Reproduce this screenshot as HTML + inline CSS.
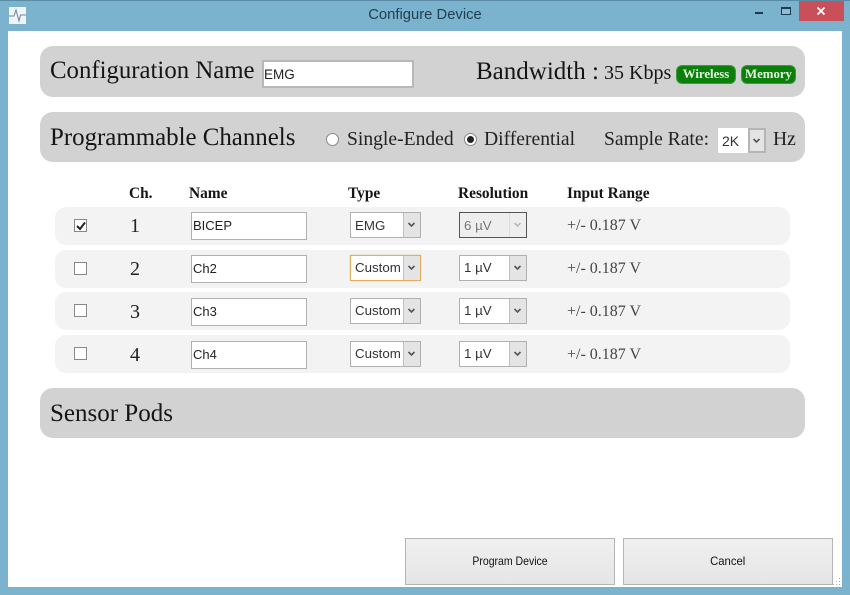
<!DOCTYPE html>
<html><head><meta charset="utf-8"><style>
html,body{margin:0;padding:0;width:850px;height:595px;overflow:hidden;background:#7bb3cf}
*{box-sizing:border-box}
div,span,svg{position:absolute}
.t{font-family:"Liberation Serif",serif;color:#151515;white-space:nowrap;line-height:1}
.s{font-family:"Liberation Sans",sans-serif;color:#222;white-space:nowrap;line-height:1}
.p{left:40px;width:765px;background:#d2d2d2;border-radius:13px}
.r{left:55px;width:735px;height:38px;background:#f3f3f3;border-radius:11px}
.i{left:191px;width:116px;height:28px;background:#fff;border:1px solid #b0b0b0;font:13px/26px "Liberation Sans",sans-serif;color:#222;padding-left:1px}
.sel{background:#fff;border:1px solid #b0b0b0;height:26px;font:13.3px/24px "Liberation Sans",sans-serif;color:#333}
.sel b{position:absolute;right:0;top:0;bottom:0;width:17px;background:#e4e4e4;border-left:1px solid #c0c0c0}
.sel svg{right:4px;top:9px}
.cb{left:74px;width:13px;height:13px;border:1px solid #888;background:#fff}
.h{font:bold 15.4px/1 "Liberation Serif",serif;color:#151515;top:186px;white-space:nowrap}
.n{left:130px;font:20px/1 "Liberation Serif",serif;color:#222}
.rng{left:567px;font:16px/1 "Liberation Serif",serif;color:#444;white-space:nowrap}
.pill{background:#0a800a;border:1px solid #3f9a3f;border-radius:6px;height:19px;top:65px;color:#e6f5e0;font:bold 12.8px/16px "Liberation Serif",serif;text-align:center}
.btn{top:538px;height:47px;border:1px solid #b5b5b5;background:linear-gradient(#f0f0f0,#e5e5e5);font:12px/45px "Liberation Sans",sans-serif;color:#111;text-align:center}
.btn span{position:static;display:inline-block}
</style></head><body>
<div style="left:0;top:0;width:850px;height:1px;background:#5c8ba5"></div>
<div style="left:8px;top:31px;width:834px;height:556px;background:#fff"></div>

<svg style="left:9px;top:7px" width="17" height="17" viewBox="0 0 17 17"><rect width="17" height="17" fill="#eef4f9"/><path d="M0 9H5L7 3 10 14 11.500 8H17" fill="none" stroke="#6a8a9c" stroke-width="1"/></svg>
<div class="s" style="left:0;width:850px;top:7px;text-align:center;font-size:14.8px;line-height:16px;color:#21404f">Configure Device</div>
<div style="left:755px;top:12px;width:8px;height:2px;background:#1d3b4e"></div>
<div style="left:781px;top:7px;width:10px;height:8px;border:1px solid #1d3b4e;border-top:2px solid #1d3b4e;background:#8fbdd6"></div>
<div style="left:799px;top:1px;width:45px;height:20px;background:#c9505a"></div>
<svg style="left:816px;top:6px" width="10" height="10" viewBox="0 0 10 10"><path d="M1.500 1.500L8.500 8.500M8.500 1.500L1.500 8.500" stroke="#fff" stroke-width="1.800"/></svg>

<div class="p" style="top:46px;height:51px"></div>
<div class="t" style="left:50px;top:59px;font-size:24.8px">Configuration Name</div>
<div class="i" style="left:262px;top:60px;width:152px;height:28px;border:2px solid #b8b8b8;font-size:13.5px;line-height:25px;padding-left:0">EMG</div>
<div class="t" style="left:476px;top:59px;font-size:25px">Bandwidth :</div>
<div class="t" style="left:604px;top:63px;font-size:20px">35 Kbps</div>
<div class="pill" style="left:676px;width:60px">Wireless</div>
<div class="pill" style="left:741px;width:55px">Memory</div>

<div class="p" style="top:112px;height:50px"></div>
<div class="t" style="left:50px;top:126px;font-size:24.9px">Programmable Channels</div>
<div style="left:326px;top:133px;width:13px;height:13px;border-radius:50%;border:1px solid #888;background:#fff"></div>
<div class="t" style="left:347px;top:130px;font-size:19.6px;color:#222">Single-Ended</div>
<div style="left:464px;top:133px;width:13px;height:13px;border-radius:50%;border:1px solid #888;background:#fff"></div>
<div style="left:467px;top:136px;width:7px;height:7px;border-radius:50%;background:#222"></div>
<div class="t" style="left:484px;top:130px;font-size:19.6px;color:#222">Differential</div>
<div class="t" style="left:604px;top:130px;font-size:19.6px;color:#222">Sample Rate:</div>
<div class="sel" style="left:718px;top:128px;width:48px;height:25px;border:0;padding-left:4px;line-height:26px;font-size:14px">2K<b style="border:2px solid #b5b5b5;width:18px"></b><svg style="right:5px;top:10px" width="9" height="6" viewBox="0 0 9 6"><path d="M1.500 1L4.500 4 7.500 1" fill="none" stroke="#555" stroke-width="1.600"/></svg></div>
<div class="t" style="left:773px;top:130px;font-size:19.6px;color:#222">Hz</div>

<div class="h" style="left:129px">Ch.</div>
<div class="h" style="left:189px">Name</div>
<div class="h" style="left:348px">Type</div>
<div class="h" style="left:458px">Resolution</div>
<div class="h" style="left:567px">Input Range</div>

<div class="r" style="top:207px"></div>
<div class="r" style="top:250px"></div>
<div class="r" style="top:292px"></div>
<div class="r" style="top:335px"></div>

<div class="cb" style="top:219px"></div>
<svg style="left:76px;top:221px" width="10" height="10" viewBox="0 0 10 10"><path d="M1 5L4 8 9 1.500" fill="none" stroke="#222" stroke-width="2"/></svg>
<div class="cb" style="top:262px"></div>
<div class="cb" style="top:304px"></div>
<div class="cb" style="top:347px"></div>

<div class="n" style="top:216px">1</div>
<div class="n" style="top:259px">2</div>
<div class="n" style="top:302px">3</div>
<div class="n" style="top:345px">4</div>

<div class="i" style="top:212px">BICEP</div>
<div class="i" style="top:255px">Ch2</div>
<div class="i" style="top:298px">Ch3</div>
<div class="i" style="top:341px">Ch4</div>

<div class="sel" style="left:350px;top:212px;width:71px;padding-left:4px;line-height:25px">EMG<b></b><svg width="9" height="6" viewBox="0 0 9 6"><path d="M1.500 1L4.500 4 7.500 1" fill="none" stroke="#555" stroke-width="1.600"/></svg></div>
<div class="sel" style="left:350px;top:255px;width:71px;padding-left:4px;border-color:#e0b060;box-shadow:0 0 1px #e0b060">Custom<b></b><svg width="9" height="6" viewBox="0 0 9 6"><path d="M1.500 1L4.500 4 7.500 1" fill="none" stroke="#555" stroke-width="1.600"/></svg></div>
<div class="sel" style="left:350px;top:298px;width:71px;padding-left:4px">Custom<b></b><svg width="9" height="6" viewBox="0 0 9 6"><path d="M1.500 1L4.500 4 7.500 1" fill="none" stroke="#555" stroke-width="1.600"/></svg></div>
<div class="sel" style="left:350px;top:341px;width:71px;padding-left:4px">Custom<b></b><svg width="9" height="6" viewBox="0 0 9 6"><path d="M1.500 1L4.500 4 7.500 1" fill="none" stroke="#555" stroke-width="1.600"/></svg></div>

<div class="sel" style="left:459px;top:212px;width:68px;padding-left:4px;background:#eee;border-color:#555;color:#777;line-height:25px">6 µV<b style="background:#eee;border-left:1px solid #ddd"></b><svg width="9" height="6" viewBox="0 0 9 6"><path d="M1.500 1L4.500 4 7.500 1" fill="none" stroke="#bbb" stroke-width="1.600"/></svg></div>
<div class="sel" style="left:459px;top:255px;width:68px;padding-left:4px">1 µV<b></b><svg width="9" height="6" viewBox="0 0 9 6"><path d="M1.500 1L4.500 4 7.500 1" fill="none" stroke="#555" stroke-width="1.600"/></svg></div>
<div class="sel" style="left:459px;top:298px;width:68px;padding-left:4px">1 µV<b></b><svg width="9" height="6" viewBox="0 0 9 6"><path d="M1.500 1L4.500 4 7.500 1" fill="none" stroke="#555" stroke-width="1.600"/></svg></div>
<div class="sel" style="left:459px;top:341px;width:68px;padding-left:4px">1 µV<b></b><svg width="9" height="6" viewBox="0 0 9 6"><path d="M1.500 1L4.500 4 7.500 1" fill="none" stroke="#555" stroke-width="1.600"/></svg></div>

<div class="rng" style="top:218px">+/- 0.187 V</div>
<div class="rng" style="top:261px">+/- 0.187 V</div>
<div class="rng" style="top:304px">+/- 0.187 V</div>
<div class="rng" style="top:347px">+/- 0.187 V</div>

<div class="p" style="top:388px;height:50px"></div>
<div class="t" style="left:50px;top:401px;font-size:25px">Sensor Pods</div>

<div class="btn" style="left:405px;width:210px"><span style="transform:scaleX(.875)">Program Device</span></div>
<div class="btn" style="left:623px;width:210px"><span style="transform:scaleX(.94)">Cancel</span></div>
<svg style="left:833px;top:577px" width="8" height="8" viewBox="0 0 8 8"><path d="M6 1h1v1H6zM3 4h1v1H3zM6 4h1v1H6zM0 7h1v1H0zM3 7h1v1H3zM6 7h1v1H6z" fill="#aaa"/></svg>
</body></html>
